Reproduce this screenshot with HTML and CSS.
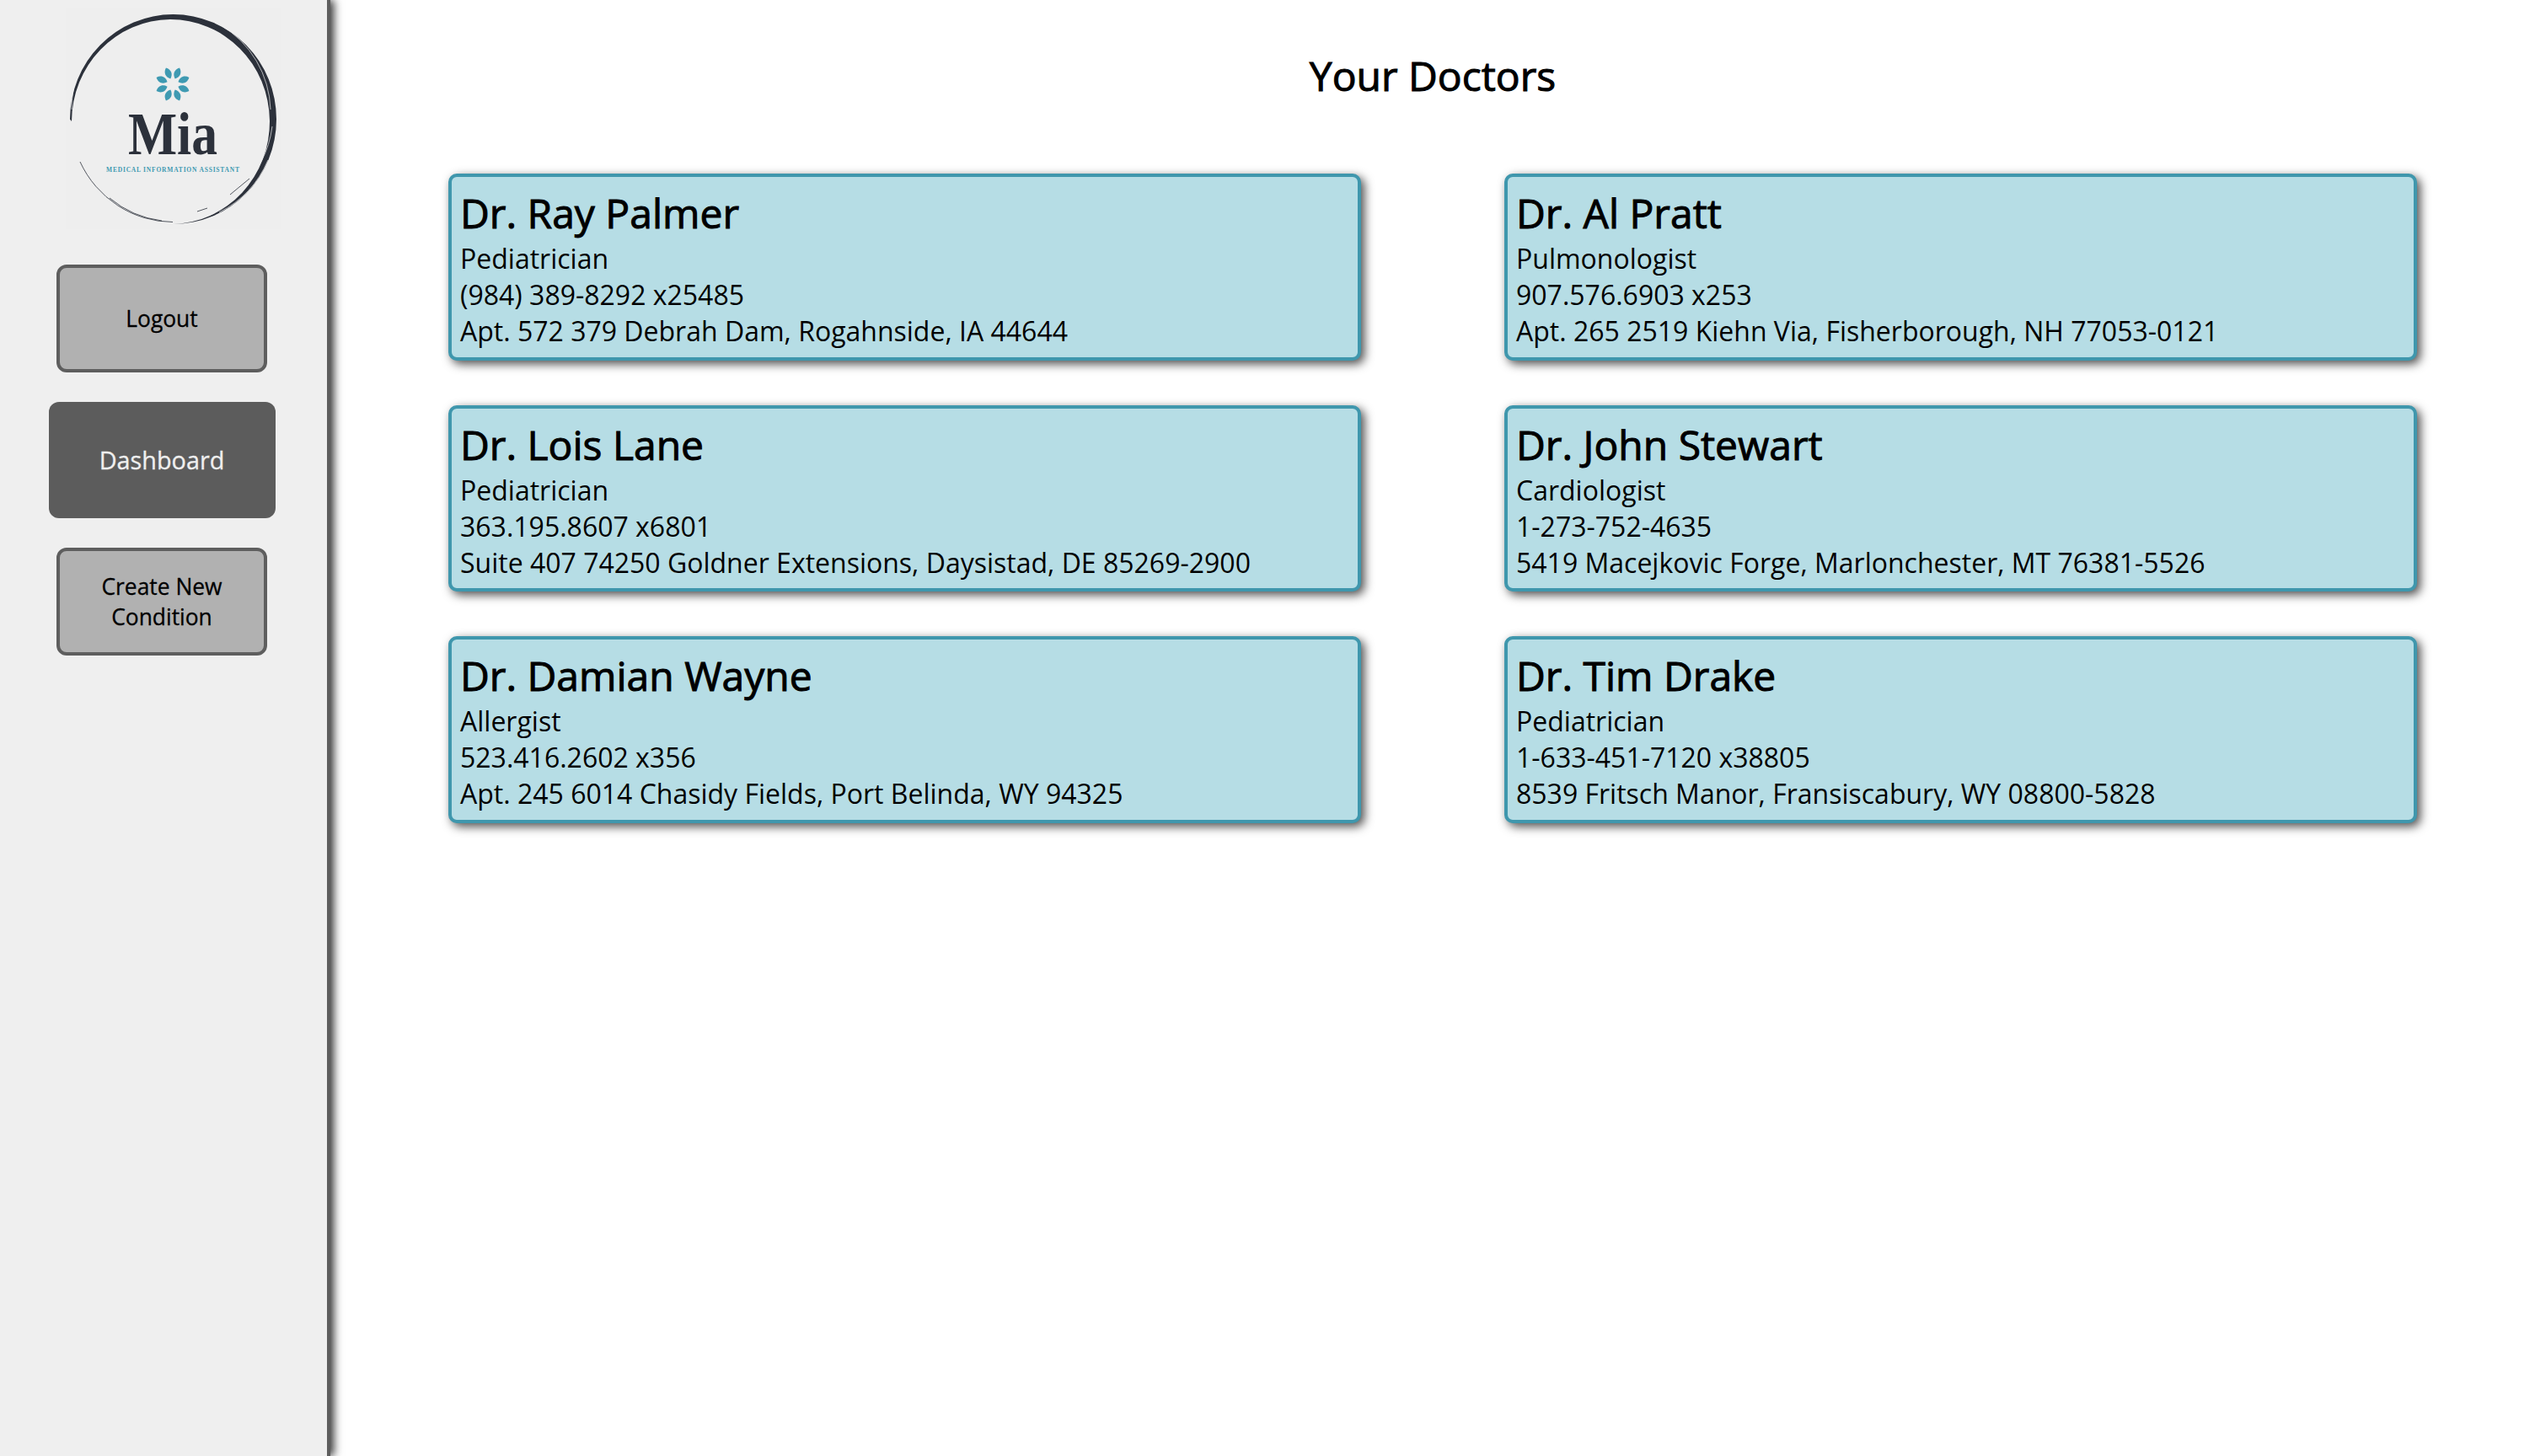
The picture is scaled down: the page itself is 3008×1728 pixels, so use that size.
FILE: index.html
```html
<!DOCTYPE html>
<html lang="en">
<head>
<meta charset="utf-8">
<title>Your Doctors</title>
<link rel="stylesheet" href="styles.css">
</head>
<body>
<div class="app">
  <aside class="sidebar">
    <svg class="logo" viewBox="78 10 256 262" width="256" height="262" aria-label="Mia logo">
      <rect x="78" y="10" width="256" height="262" fill="#eeeeee"/>
      <path class="ink" d="M83 141.500 A122.500 124.500 0 1 1 205.500 266 A117.500 121.500 0 1 0 85 144 Z"/>
      <path class="streak" d="M92 88 A122 124 0 0 0 85 130"/>
      <path class="streak" d="M262 30 A118 120 0 0 1 321 130"/>
      <path class="streak" d="M323 150 A118 120 0 0 1 283 226"/>
      <path class="streak" d="M318 190 A122 124 0 0 1 260 252"/>
      <path class="thin" d="M95 192 A122 124 0 0 0 205 263.500"/>
      <path class="thin" d="M130 235 A120 122 0 0 0 192 262"/>
      <path class="thin" d="M273 231 L296 212"/>
      <path class="thin" d="M234 251 L246 247"/>
      <g class="flower" transform="translate(205 100)">
        <path d="M0 -7 C-5 -11 -5 -17 0 -21 C5 -17 5 -11 0 -7 Z" transform="rotate(22.500)"/>
        <path d="M0 -7 C-5 -11 -5 -17 0 -21 C5 -17 5 -11 0 -7 Z" transform="rotate(67.500)"/>
        <path d="M0 -7 C-5 -11 -5 -17 0 -21 C5 -17 5 -11 0 -7 Z" transform="rotate(112.500)"/>
        <path d="M0 -7 C-5 -11 -5 -17 0 -21 C5 -17 5 -11 0 -7 Z" transform="rotate(157.500)"/>
        <path d="M0 -7 C-5 -11 -5 -17 0 -21 C5 -17 5 -11 0 -7 Z" transform="rotate(202.500)"/>
        <path d="M0 -7 C-5 -11 -5 -17 0 -21 C5 -17 5 -11 0 -7 Z" transform="rotate(247.500)"/>
        <path d="M0 -7 C-5 -11 -5 -17 0 -21 C5 -17 5 -11 0 -7 Z" transform="rotate(292.500)"/>
        <path d="M0 -7 C-5 -11 -5 -17 0 -21 C5 -17 5 -11 0 -7 Z" transform="rotate(337.500)"/>
      </g>
      <text class="logo-name" x="152" y="183" textLength="106" lengthAdjust="spacingAndGlyphs">Mia</text>
      <text class="logo-tag" x="126" y="204" textLength="158" lengthAdjust="spacing">MEDICAL INFORMATION ASSISTANT</text>
    </svg>
    <nav class="nav">
      <button class="btn btn-outline">Logout</button>
      <button class="btn btn-active">Dashboard</button>
      <button class="btn btn-outline">Create New Condition</button>
    </nav>
  </aside>
  <main class="main">
    <h1 class="title">Your Doctors</h1>
    <section class="grid">
      <article class="card">
        <h2 class="name">Dr. Ray Palmer</h2>
        <p>Pediatrician</p>
        <p>(984) 389-8292 x25485</p>
        <p>Apt. 572 379 Debrah Dam, Rogahnside, IA 44644</p>
      </article>
      <article class="card">
        <h2 class="name">Dr. Al Pratt</h2>
        <p>Pulmonologist</p>
        <p>907.576.6903 x253</p>
        <p>Apt. 265 2519 Kiehn Via, Fisherborough, NH 77053-0121</p>
      </article>
      <article class="card">
        <h2 class="name">Dr. Lois Lane</h2>
        <p>Pediatrician</p>
        <p>363.195.8607 x6801</p>
        <p>Suite 407 74250 Goldner Extensions, Daysistad, DE 85269-2900</p>
      </article>
      <article class="card">
        <h2 class="name">Dr. John Stewart</h2>
        <p>Cardiologist</p>
        <p>1-273-752-4635</p>
        <p>5419 Macejkovic Forge, Marlonchester, MT 76381-5526</p>
      </article>
      <article class="card">
        <h2 class="name">Dr. Damian Wayne</h2>
        <p>Allergist</p>
        <p>523.416.2602 x356</p>
        <p>Apt. 245 6014 Chasidy Fields, Port Belinda, WY 94325</p>
      </article>
      <article class="card">
        <h2 class="name">Dr. Tim Drake</h2>
        <p>Pediatrician</p>
        <p>1-633-451-7120 x38805</p>
        <p>8539 Fritsch Manor, Fransiscabury, WY 08800-5828</p>
      </article>
    </section>
  </main>
</div>
</body>
</html>
```
FILE: styles.css
```css
* { box-sizing: border-box; }
html, body { margin: 0; height: 100%; background: #fff; }
body { font-family: "Open Sans", "Noto Sans", sans-serif; color: #000; overflow: hidden; }
.app { display: flex; height: 1728px; }

.sidebar {
  width: 392px;
  flex: none;
  background: #efefef;
  border-right: 4px solid #5e5e5e;
  box-shadow: 4px 0 10px rgba(0, 0, 0, 0.8);
  display: flex;
  flex-direction: column;
  padding: 10px 4px 0 0;
}
.logo { display: block; margin-left: 78px; }
.ink { fill: #2c313b; }
.thin { fill: none; stroke: #2c313b; stroke-width: 0.800; }
.streak { fill: none; stroke: #eeeeee; stroke-width: 0.700; }
.flower { fill: #3f9ab2; }
.logo-name { font-family: "Liberation Serif", serif; font-weight: 700; font-size: 72px; fill: #2c313b; }
.logo-tag { font-family: "Liberation Serif", serif; font-weight: 700; font-size: 7.500px; fill: #3f9ab2; }

.nav { display: flex; flex-direction: column; align-items: center; margin-top: 42px; }
.btn {
  font-family: inherit;
  font-size: 26.400px;
  line-height: 36px;
  border-radius: 12px;
  text-align: center;
  padding: 0 20px;
  -webkit-text-stroke: 0.300px currentColor;
}
.btn-outline { width: 250px; height: 128px; background: #b1b1b1; border: 4px solid #5e5e5e; color: #000; }
.btn-active { width: 269px; height: 138px; background: #5c5c5c; border: 0; color: #efefef; font-size: 28.800px; margin: 35px 0; }

.main { flex: 1; min-width: 0; padding: 0 140px; }
.title { margin: 0; padding-top: 57px; height: 206px; font-size: 48px; line-height: 65px; font-weight: 400; text-align: center; color: #000; -webkit-text-stroke: 1px #000; }
.grid { display: grid; grid-template-columns: 1fr 1fr; column-gap: 170px; row-gap: 53px; }
.card {
  height: 221.500px;
  background: #b6dde5;
  border: 4px solid #3f97ad;
  border-radius: 10px;
  box-shadow: 4px 4px 12px rgba(0, 0, 0, 0.7);
  padding: 10px 10px 0;
}
.name { margin: 0; font-size: 48px; line-height: 65px; font-weight: 400; -webkit-text-stroke: 1px #000; }
.card p { margin: 0; font-size: 32px; line-height: 43px; }
```
